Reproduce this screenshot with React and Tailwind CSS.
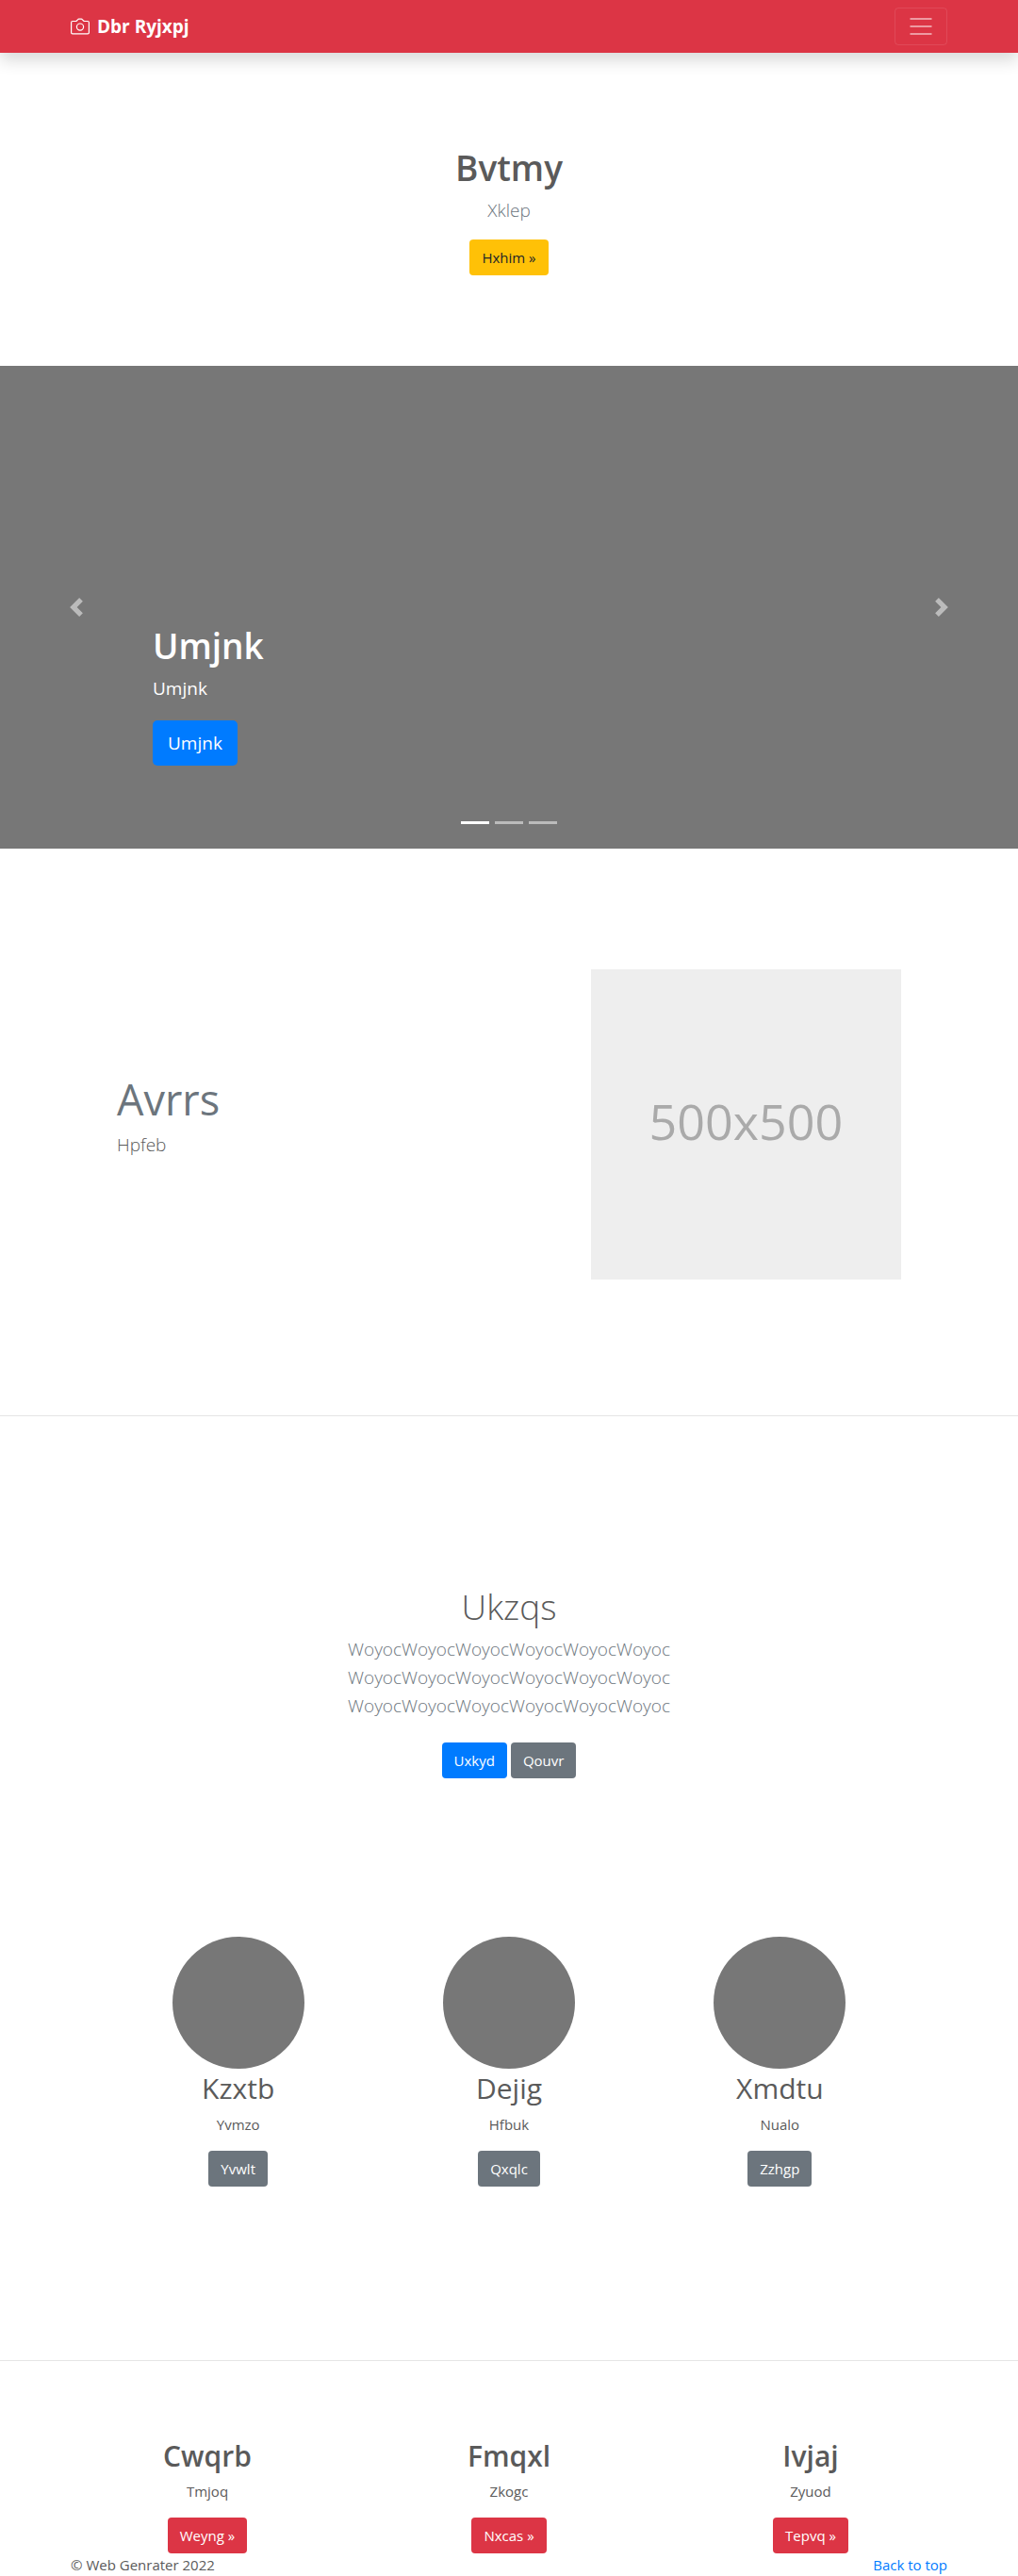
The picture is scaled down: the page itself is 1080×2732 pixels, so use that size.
const people = [
  { name: 'Kzxtb', text: 'Yvmzo', action: 'Yvwlt' },
  { name: 'Dejig', text: 'Hfbuk', action: 'Qxqlc' },
  { name: 'Xmdtu', text: 'Nualo', action: 'Zzhgp' },
];

const links = [
  { name: 'Cwqrb', text: 'Tmjoq', action: 'Weyng »' },
  { name: 'Fmqxl', text: 'Zkogc', action: 'Nxcas »' },
  { name: 'Ivjaj', text: 'Zyuod', action: 'Tepvq »' },
];

const tones = {
  primary: 'bg-[#007bff] text-white',
  secondary: 'bg-[#6c757d] text-white',
  warning: 'bg-[#ffc107] text-[#212529]',
  danger: 'bg-[#dc3545] text-white',
};

function Button({ tone, children }) {
  return (
    <button type="button" className={`h-[38px] rounded px-[13px] text-[15px] leading-6 ${tones[tone]}`}>
      {children}
    </button>
  );
}

function Header() {
  return (
    <header className="relative z-10 bg-[#dc3545] shadow-[0_8px_16px_rgba(0,0,0,0.15)]">
      <div className="mx-auto flex h-14 max-w-[960px] items-center justify-between px-[15px]">
        <a href="#top" className="flex items-center gap-2 text-[19px] leading-[30px] font-bold text-white">
          <svg width="20" height="20" viewBox="0 0 20 20" fill="none" stroke="currentColor" strokeWidth="1.2" aria-hidden="true">
            <path d="M2 4.500h3.200c.5 0 .9-.2 1.200-.5l1.100-1.200c.3-.4.7-.6 1.200-.6h2.600c.5 0 .9.2 1.200.6L13.600 4c.3.3.7.5 1.200.5H18c.8 0 1.400.6 1.400 1.400v10.600c0 .8-.6 1.400-1.400 1.400H2c-.8 0-1.400-.6-1.400-1.400V5.900c0-.8.6-1.400 1.400-1.400z" />
            <circle cx="10" cy="10.600" r="3.600" />
          </svg>
          Dbr Ryjxpj
        </a>
        <button type="button" aria-label="Toggle navigation" className="flex h-10 w-14 items-center justify-center rounded border border-white/10">
          <svg width="30" height="30" viewBox="0 0 30 30" stroke="rgba(255,255,255,0.5)" strokeWidth="2" strokeMiterlimit="10" aria-hidden="true">
            <path d="M3.500 7h23M3.500 15h23M3.500 23h23" />
          </svg>
        </button>
      </div>
    </header>
  );
}

function Carousel() {
  return (
    <section className="relative flex h-[512px] flex-col justify-end bg-[#777] text-white">
      <div className="mx-[15%] pb-[88px]">
        <h1 className="text-[37px] leading-[50px] font-semibold">Umjnk</h1>
        <p className="mt-[6px] mb-5 text-[19px] leading-7">Umjnk</p>
        <button type="button" className="block h-12 rounded-[5px] bg-[#007bff] px-4 text-[19px] leading-[30px]">Umjnk</button>
      </div>
      <button type="button" aria-label="Previous" className="absolute inset-y-0 left-0 flex w-[15%] items-center justify-center opacity-50">
        <svg width="20" height="20" viewBox="0 0 8 8" fill="#fff"><path d="M5.250 0l-4 4 4 4 1.500-1.500L4.250 4l2.500-2.500L5.250 0z" /></svg>
      </button>
      <button type="button" aria-label="Next" className="absolute inset-y-0 right-0 flex w-[15%] items-center justify-center opacity-50">
        <svg width="20" height="20" viewBox="0 0 8 8" fill="#fff"><path d="M2.750 0l-1.500 1.500L3.750 4l-2.500 2.500L2.750 8l4-4-4-4z" /></svg>
      </button>
      <div className="absolute inset-x-0 bottom-[26px] flex justify-center gap-[6px]">
        <button type="button" aria-label="Slide 1" className="h-[3px] w-[30px] bg-white" />
        <button type="button" aria-label="Slide 2" className="h-[3px] w-[30px] bg-white/50" />
        <button type="button" aria-label="Slide 3" className="h-[3px] w-[30px] bg-white/50" />
      </div>
    </section>
  );
}

export default function App() {
  return (
    <div id="top" className="bg-white font-['Open_Sans','Noto_Sans',sans-serif] text-[15px] leading-6 text-[#5a5a5a]">
      <Header />
      <main>
        <section className="px-4 py-24 text-center">
          <h1 className="text-[37px] leading-[52px] font-semibold">Bvtmy</h1>
          <p className="mt-1 mb-4 text-[19px] leading-[30px] font-light text-[#6c757d]">Xklep</p>
          <Button tone="warning">Hxhim »</Button>
        </section>

        <Carousel />

        <section className="mx-auto grid max-w-[862px] grid-cols-12 items-center pt-32 pb-36">
          <div className="col-span-7 px-[15px] pb-4">
            <h2 className="text-[45px] leading-[50px] text-[#6c757d]">Avrrs</h2>
            <p className="mt-2 text-[19px] leading-[30px] font-light">Hpfeb</p>
          </div>
          <div className="col-span-5 px-[15px]">
            <div className="flex aspect-square items-center justify-center bg-[#eee] pb-2 text-[52px] leading-none text-[#aaa]">500x500</div>
          </div>
        </section>

        <hr className="border-t border-black/10" />

        <section className="px-4 pt-44 pb-[168px] text-center">
          <h1 className="text-[37px] leading-[52px] font-light">Ukzqs</h1>
          <p className="mt-1 mb-6 text-[19px] leading-[30px] font-light text-[#6c757d]">
            WoyocWoyocWoyocWoyocWoyocWoyoc
            <br />
            WoyocWoyocWoyocWoyocWoyocWoyoc
            <br />
            WoyocWoyocWoyocWoyocWoyocWoyoc
          </p>
          <div className="flex justify-center gap-1">
            <Button tone="primary">Uxkyd</Button>
            <Button tone="secondary">Qouvr</Button>
          </div>
        </section>

        <section className="mx-auto grid max-w-[862px] grid-cols-3 pb-[184px] text-center">
          {people.map((p) => (
            <div key={p.name}>
              <div className="mx-auto size-[140px] rounded-full bg-[#777]" />
              <h2 className="text-[30px] leading-[41px]">{p.name}</h2>
              <p className="mt-[6px] mb-4">{p.text}</p>
              <Button tone="secondary">{p.action}</Button>
            </div>
          ))}
        </section>

        <hr className="border-t border-black/10" />

        <section className="mx-auto grid max-w-[960px] grid-cols-3 pt-20 text-center">
          {links.map((l) => (
            <div key={l.name}>
              <h2 className="text-[30px] leading-[41px] font-semibold">{l.name}</h2>
              <p className="mt-[5px] mb-4">{l.text}</p>
              <Button tone="danger">{l.action}</Button>
            </div>
          ))}
        </section>
      </main>
      <footer className="mx-auto flex max-w-[960px] justify-between px-[15px]">
        <p>© Web Genrater 2022</p>
        <a href="#top" className="text-[#007bff]">Back to top</a>
      </footer>
    </div>
  );
}
